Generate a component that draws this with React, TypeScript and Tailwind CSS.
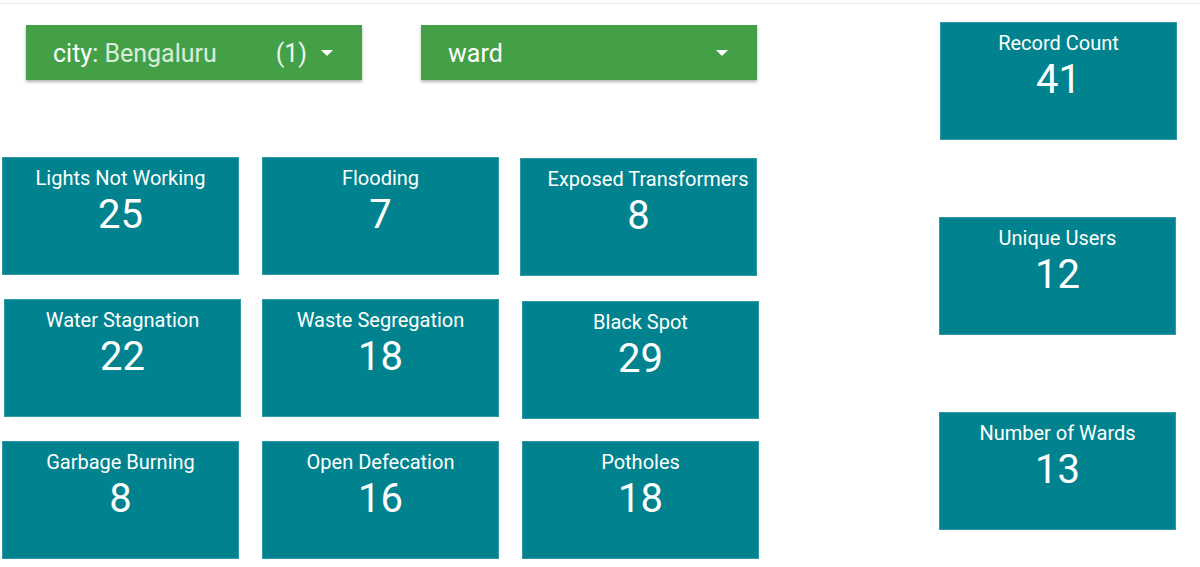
import React from "react";

interface Tile {
  label: string;
  value: number;
  className?: string;
  labelClassName?: string;
}

const issues: Tile[] = [
  { label: "Lights Not Working", value: 25 },
  { label: "Flooding", value: 7 },
  { label: "Exposed Transformers", value: 8, className: "ml-[-2px] mt-[1px] mb-[-1px]", labelClassName: "pl-[19px]" },
  { label: "Water Stagnation", value: 22, className: "ml-[2px]" },
  { label: "Waste Segregation", value: 18 },
  { label: "Black Spot", value: 29, className: "mt-[2px] mb-[-2px]" },
  { label: "Garbage Burning", value: 8 },
  { label: "Open Defecation", value: 16 },
  { label: "Potholes", value: 18 },
];

const totals: Tile[] = [
  { label: "Record Count", value: 41, className: "ml-[1px]" },
  { label: "Unique Users", value: 12 },
  { label: "Number of Wards", value: 13 },
];

function Scorecard({ label, value, className = "", labelClassName = "" }: Tile) {
  return (
    <div
      className={`w-[237px] h-[118px] bg-[#00838f] border border-[#2f9aa3] flex flex-col items-center pt-[8px] text-white ${className}`}
    >
      <div className={`text-[20px] leading-[24px] whitespace-nowrap ${labelClassName}`}>{label}</div>
      <div className="text-[40px] leading-[48px] mt-[1px]">{value}</div>
    </div>
  );
}

function Caret() {
  return (
    <svg width="12" height="6" viewBox="0 0 12 6" className="flex-shrink-0">
      <path d="M0 0 L12 0 L6 6 Z" fill="#ffffff" />
    </svg>
  );
}

function Dropdown({ children }: { children: React.ReactNode }) {
  return (
    <div className="w-[336px] h-[55px] bg-[#43a047] shadow-[0_2px_3px_rgba(0,0,0,0.3)] flex items-center pl-[27px] pr-[29px] text-white text-[25px] leading-[55px]">
      {children}
    </div>
  );
}

export default function App() {
  return (
    <div className="w-[1200px] h-[567px] bg-white overflow-hidden font-['Roboto','Liberation_Sans',sans-serif]">
      <div className="h-[3px]" />
      <div className="h-px bg-[#e6e6ee]" />
      <div className="flex">
        {/* Filters + issue tiles */}
        <div className="w-[760px]">
          <div className="flex gap-[59px] mt-[21px] ml-[26px]">
            <Dropdown>
              <span className="flex-1 whitespace-nowrap pt-[2px]">
                city: <span className="text-white/80">Bengaluru</span>
              </span>
              <span className="mr-[14px] pt-[2px] pl-[4px] text-white/90">(1)</span>
              <Caret />
            </Dropdown>
            <Dropdown>
              <span className="flex-1 pt-[2px]">ward</span>
              <Caret />
            </Dropdown>
          </div>
          <div className="grid grid-cols-[237px_237px_237px] gap-x-[23px] gap-y-[24px] mt-[77px] ml-[2px]">
            {issues.map((t) => (
              <Scorecard key={t.label} {...t} />
            ))}
          </div>
        </div>

        {/* Totals */}
        <div className="flex flex-col gap-[77px] mt-[18px] ml-[179px]">
          {totals.map((t) => (
            <Scorecard key={t.label} {...t} />
          ))}
        </div>
      </div>
    </div>
  );
}
